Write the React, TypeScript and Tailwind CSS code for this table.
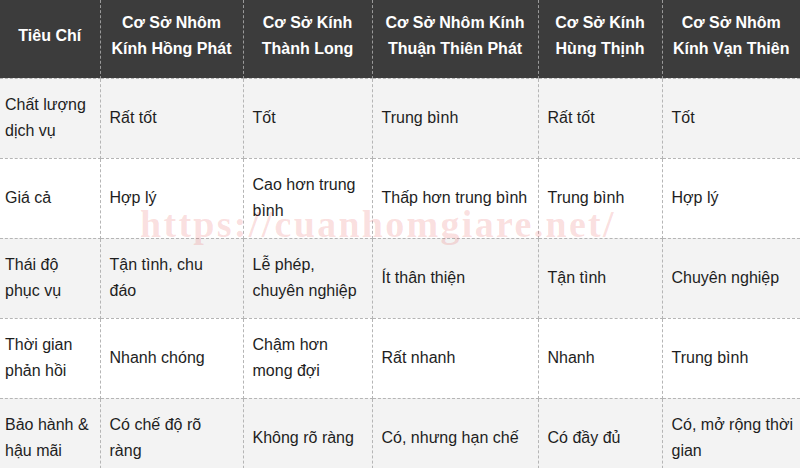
import React from "react";

const headers = [
  "Tiêu Chí",
  "Cơ Sở Nhôm Kính Hồng Phát",
  "Cơ Sở Kính Thành Long",
  "Cơ Sở Nhôm Kính Thuận Thiên Phát",
  "Cơ Sở Kính Hùng Thịnh",
  "Cơ Sở Nhôm Kính Vạn Thiên",
];

const rows: string[][] = [
  ["Chất lượng dịch vụ", "Rất tốt", "Tốt", "Trung bình", "Rất tốt", "Tốt"],
  ["Giá cả", "Hợp lý", "Cao hơn trung bình", "Thấp hơn trung bình", "Trung bình", "Hợp lý"],
  ["Thái độ phục vụ", "Tận tình, chu đáo", "Lễ phép, chuyên nghiệp", "Ít thân thiện", "Tận tình", "Chuyên nghiệp"],
  ["Thời gian phản hồi", "Nhanh chóng", "Chậm hơn mong đợi", "Rất nhanh", "Nhanh", "Trung bình"],
  ["Bảo hành & hậu mãi", "Có chế độ rõ ràng", "Không rõ ràng", "Có, nhưng hạn chế", "Có đầy đủ", "Có, mở rộng thời gian"],
];

const widths = [100, 143, 129, 166, 124, 138];

const cellCls = [
  "border border-dashed border-[#b5b5b5] border-l-0 pl-[5px] pr-[4px] align-middle text-[16px] leading-[26px] text-[#1e1e1e]",
  "border border-dashed border-[#b5b5b5] pl-[9px] pr-[13px] align-middle text-[16px] leading-[26px] text-[#1e1e1e]",
  "border border-dashed border-[#b5b5b5] pl-[9px] pr-[8px] align-middle text-[16px] leading-[26px] text-[#1e1e1e]",
  "border border-dashed border-[#b5b5b5] pl-[9px] pr-[6px] align-middle text-[16px] leading-[26px] text-[#1e1e1e]",
  "border border-dashed border-[#b5b5b5] pl-[9px] pr-[6px] align-middle text-[16px] leading-[26px] text-[#1e1e1e]",
  "border border-dashed border-[#b5b5b5] border-r-0 pl-[9px] pr-[6px] align-middle text-[16px] leading-[26px] text-[#1e1e1e]",
];

export default function App() {
  return (
    <div
      className="relative w-[800px] h-[468px] overflow-hidden bg-white"
      style={{ fontFamily: '"Liberation Sans", Arial, sans-serif' }}
    >
      <table className="w-[800px] table-fixed border-collapse">
        <colgroup>
          {widths.map((w, i) => (
            <col key={i} style={{ width: w }} />
          ))}
        </colgroup>
        <thead>
          <tr className="h-[78px] bg-[#3c3c3c]">
            {headers.map((h, i) => (
              <th
                key={i}
                className="border-x border-b border-dashed border-x-[#9a9a9a] border-b-[#b5b5b5] first:border-l-0 last:border-r-0 px-2 pb-[6px] text-center align-middle text-[16px] font-bold leading-[26px] text-white"
              >
                {h}
              </th>
            ))}
          </tr>
        </thead>
        <tbody>
          {rows.map((r, ri) => (
            <tr
              key={ri}
              className={ri % 2 === 0 ? "h-[80px] bg-[#f3f3f3]" : "h-[80px] bg-white"}
            >
              {r.map((c, ci) => (
                <td key={ci} className={cellCls[ci]}>
                  {c}
                </td>
              ))}
            </tr>
          ))}
        </tbody>
      </table>
      <div
        className="pointer-events-none absolute left-[140px] top-[204px] whitespace-nowrap text-[38px] font-bold leading-[40px] tracking-[2.3px] text-[rgba(225,60,60,0.17)]"
        style={{ fontFamily: '"Liberation Serif", "Times New Roman", serif' }}
      >
        https://cuanhomgiare.net/
      </div>
    </div>
  );
}
